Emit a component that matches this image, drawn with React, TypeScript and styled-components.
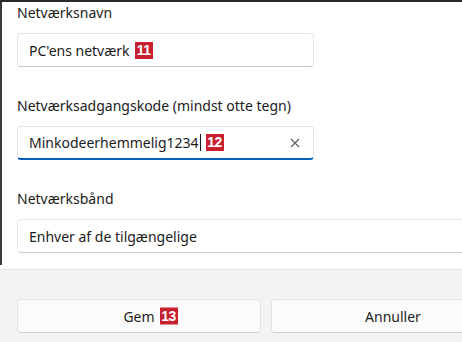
import React from "react";
import styled, { createGlobalStyle } from "styled-components";

const GlobalStyle = createGlobalStyle`
  html, body {
    margin: 0;
    padding: 0;
    background: #ffffff;
    overflow: hidden;
  }
  body {
    font-family: "Noto Sans", "Open Sans", sans-serif;
    color: #1b1b1b;
  }
`;

const Page = styled.div`
  width: 100vw;
  height: 342px;
  display: flex;
  flex-direction: column;
  border-top: 2px solid #2a2a2a;
  box-sizing: border-box;
  overflow: hidden;
`;

const Content = styled.div`
  display: flex;
  flex-direction: column;
  gap: 29px;
  padding: 1px 0 0 15px;
  border-left: 2px solid #3a3a3a;
  height: 263px;
  flex-shrink: 0;
  box-sizing: border-box;
`;

const Gap = styled.div`
  height: 4px;
  flex-shrink: 0;
`;

const Field = styled.div`
  display: flex;
  flex-direction: column;
  gap: 10px;
`;

const Label = styled.div`
  font-size: 14px;
  line-height: 20px;
  color: #1b1b1b;
`;

const Box = styled.div<{ $focused?: boolean; $wide?: boolean }>`
  position: relative;
  display: flex;
  align-items: center;
  flex-shrink: 0;
  box-sizing: border-box;
  width: ${(p) => (p.$wide ? "498px" : "297px")};
  height: 34px;
  padding: 0 11px;
  background: #ffffff;
  border: 1px solid #e6e6e6;
  border-bottom: ${(p) => (p.$focused ? "2px solid #005fb8" : "1px solid #c9c9c9")};
  border-radius: 4px;
  font-size: 14px;
  color: #1b1b1b;
`;

const Value = styled.span`
  white-space: nowrap;
`;

const Caret = styled.span`
  display: inline-block;
  width: 1px;
  height: 17px;
  background: #1b1b1b;
  margin-left: 1px;
`;

const Badge = styled.span`
  display: inline-flex;
  align-items: center;
  justify-content: center;
  height: 17px;
  min-width: 18px;
  padding: 0 1px;
  box-sizing: border-box;
  background: #c8202e;
  color: #ffffff;
  font-family: "Liberation Sans", Arial, sans-serif;
  font-weight: 700;
  font-size: 14px;
  letter-spacing: -0.5px;
  line-height: 17px;
  margin-left: 5px;
`;

const ClearIcon = styled.svg`
  position: absolute;
  right: 13px;
  top: 50%;
  transform: translateY(-50%);
`;

const Footer = styled.div`
  flex: 1;
  display: flex;
  gap: 10px;
  padding: 29px 0 0 17px;
  background: #f3f3f3;
  border-top: 1px solid #e3e3e3;
`;

const Button = styled.button`
  width: 244px;
  height: 34px;
  flex-shrink: 0;
  display: flex;
  align-items: center;
  justify-content: center;
  background: #fbfbfb;
  border: 1px solid #e3e3e3;
  border-bottom-color: #cfcfcf;
  border-radius: 4px;
  font-family: "Noto Sans", "Open Sans", sans-serif;
  font-size: 14px;
  color: #1b1b1b;
  padding: 0;
`;

const ButtonLabel = styled.span`
  position: relative;
`;

const FloatBadge = styled(Badge)`
  position: absolute;
  left: 100%;
  top: 50%;
  transform: translateY(-50%);
`;

export default function App() {
  return (
    <>
      <GlobalStyle />
      <Page>
        <Content>
          <Field>
            <Label>Netværksnavn</Label>
            <Box>
              <Value>PC'ens netværk</Value>
              <Badge>11</Badge>
            </Box>
          </Field>
          <Field>
            <Label>Netværksadgangskode (mindst otte tegn)</Label>
            <Box $focused>
              <Value>Minkodeerhemmelig1234</Value>
              <Caret />
              <Badge>12</Badge>
              <ClearIcon width="10" height="10" viewBox="0 0 10 10">
                <path d="M1 1L9 9M9 1L1 9" stroke="#5c5c5c" strokeWidth="1.1" fill="none" />
              </ClearIcon>
            </Box>
          </Field>
          <Field>
            <Label>Netværksbånd</Label>
            <Box $wide>
              <Value>Enhver af de tilgængelige</Value>
            </Box>
          </Field>
        </Content>
        <Gap />
        <Footer>
          <Button>
            <ButtonLabel>
              Gem
              <FloatBadge>13</FloatBadge>
            </ButtonLabel>
          </Button>
          <Button>Annuller</Button>
        </Footer>
      </Page>
    </>
  );
}
